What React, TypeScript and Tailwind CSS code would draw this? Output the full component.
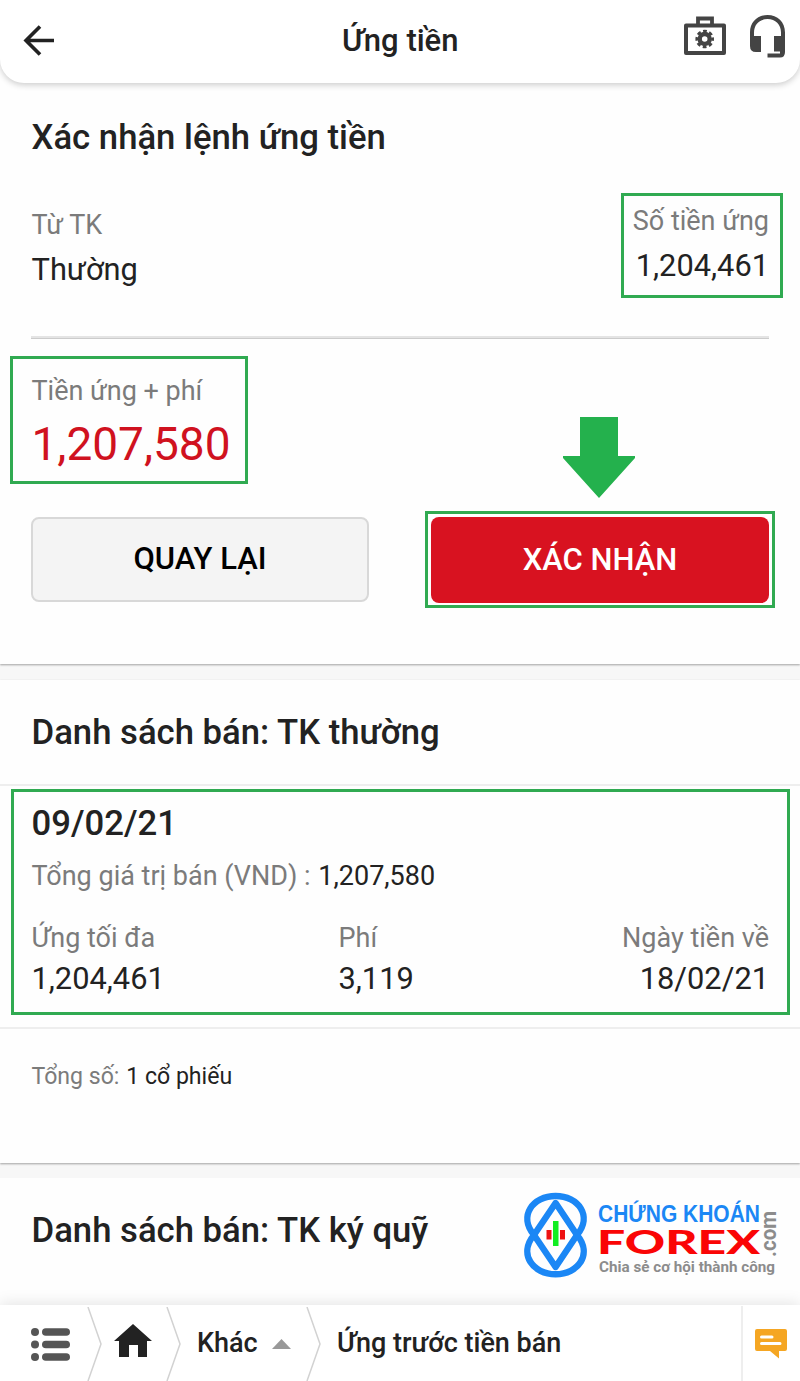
import type { ReactNode } from "react";

const label = "text-[27px] leading-8 text-[#7b7b7b]";
const value = "text-[30.8px] leading-9 text-[#222222]";
const heading = "text-[34.7px] font-medium leading-10 text-[#222222]";

const details = [
  { label: "Ứng tối đa", value: "1,204,461", className: "w-[307px]" },
  { label: "Phí", value: "3,119", className: "flex-1" },
  { label: "Ngày tiền về", value: "18/02/21", className: "text-right" },
];

function Highlight({ className, children }: { className: string; children: ReactNode }) {
  return <div className={`border-3 border-[#30aa51] ${className}`}>{children}</div>;
}

function ToolboxIcon() {
  return (
    <svg width="42" height="40" viewBox="0 0 42 40" fill="none" stroke="#444444">
      <path d="M2 9.500h38V37H2z" strokeWidth="4" strokeLinejoin="round" />
      <path d="M14 9V2.500h14V9" strokeWidth="3.8" />
      <circle cx="20.7" cy="23" r="5" strokeWidth="4.4" />
      <circle cx="20.7" cy="23" r="7.9" strokeWidth="2.8" strokeDasharray="3.7 2.505" strokeDashoffset="1.85" />
    </svg>
  );
}

function HeadsetIcon() {
  return (
    <svg width="36" height="44" viewBox="0 0 36 44" fill="#444444">
      <path d="M0 17.500C0 7 7.500 0 17.500 0S35 7 35 17.500V37q0 5.500-5 5.500H17.500v-4H30v-2h-6V21h7v-3.500C31 9.500 25.500 4 17.500 4S4 9.500 4 17.500V21h7v16H6q-6 0-6-6z" />
    </svg>
  );
}

function Logo() {
  return (
    <svg width="260" height="90" viewBox="520 1190 260 90">
      <g fill="none" stroke="#1b87f5" strokeWidth="6.4" strokeLinejoin="round">
        <path d="M555.600 1267 534 1235C518 1216 533 1196 555.600 1196S593 1216 577 1235Z" />
        <path d="M555.600 1203 534 1235C518 1254 533 1274.300 555.600 1274.300S593 1254 577 1235Z" />
      </g>
      <path d="M546.500 1230h5v9.500h-5zM560 1230h5v9.500h-5z" fill="#ee1111" />
      <path d="M553 1221h5.500v25H553z" fill="#11ee22" />
      <text x="598" y="1222" fontSize="23" fontWeight="700" fill="#1b87f5" fontFamily="Liberation Sans, sans-serif" textLength="162" lengthAdjust="spacingAndGlyphs">CHỨNG KHOÁN</text>
      <text x="597" y="1253.5" fontSize="33" fontWeight="900" fill="#fa0505" fontFamily="Lato, sans-serif" textLength="163" lengthAdjust="spacingAndGlyphs">FOREX</text>
      <text x="599" y="1271.5" fontSize="15.5" fontWeight="700" fill="#8c8c8c" fontFamily="Roboto, sans-serif" textLength="176" lengthAdjust="spacingAndGlyphs">Chia sẻ cơ hội thành công</text>
      <text transform="translate(776 1257) rotate(-90)" fontSize="22" fontWeight="700" fill="#8c8c8c" fontFamily="Roboto, sans-serif" textLength="46" lengthAdjust="spacingAndGlyphs">.com</text>
    </svg>
  );
}

function Separator() {
  return (
    <svg className="shrink-0" width="15" height="74" viewBox="0 0 15 74" fill="none" stroke="#d2d2d2" strokeWidth="1.5">
      <path d="M1 0 14 37 1 74" />
    </svg>
  );
}

export default function App() {
  return (
    <div className="flex h-[1381px] w-[800px] flex-col overflow-hidden bg-[#f7f7f7] font-['Roboto',sans-serif]">
      <div className="h-[664px] bg-[#fefefe] shadow-[0_1px_2px_rgba(0,0,0,0.35)]">
        <header className="flex h-[83px] items-start rounded-b-[24px] bg-white pl-[23px] pr-[14px] shadow-[0_2px_6px_rgba(0,0,0,0.2)]">
          <svg className="mt-[25px]" width="31" height="31" viewBox="0 0 31 31" fill="none" stroke="#222222" strokeWidth="3.6">
            <path d="M31 15.500H3M17 1.500 3 15.500l14 14" />
          </svg>
          <h1 className="ml-[288px] mt-[23px] w-[130px] text-[31px] font-medium leading-9 text-[#222222]">Ứng tiền</h1>
          <div className="ml-auto mt-[15px] flex gap-6">
            <div className="pt-px">
              <ToolboxIcon />
            </div>
            <HeadsetIcon />
          </div>
        </header>

        <h2 className={`ml-[31.5px] mt-[34px] ${heading}`}>Xác nhận lệnh ứng tiền</h2>
        <div className="mt-9 flex justify-between pl-[31.5px] pr-[17px]">
          <div className="pt-4">
            <p className={label}>Từ TK</p>
            <p className={`mt-[11px] ${value}`}>Thường</p>
          </div>
          <Highlight className="h-[105px] w-[162px] pr-[11px] pt-[9px] text-right">
            <p className={label}>Số tiền ứng</p>
            <p className={`mt-[11px] ${value}`}>1,204,461</p>
          </Highlight>
        </div>
        <div className="mx-[31px] mt-[38px] h-[3px] border-b border-[#cccccc] bg-[#e4e4e4]" />

        <div className="mt-[17px] flex h-[155px] items-start pl-2.5">
          <Highlight className="h-32 w-[238px] pl-[18.5px] pt-4">
            <p className={label}>Tiền ứng + phí</p>
            <p className="mt-[11px] text-[46px] leading-[52px] text-[#d0121f]">1,207,580</p>
          </Highlight>
          <svg className="ml-[315px] mt-[61px]" width="72" height="81" viewBox="0 0 72 81" fill="#24b14d">
            <path d="M17 0h38v39h17v2L36 81 0 41v-2h17z" />
          </svg>
        </div>
        <div className="flex items-center justify-between pl-[31px] pr-[25px]">
          <button className="h-[85px] w-[338px] rounded-lg border-2 border-[#d8d8d8] bg-[#f4f4f4] text-[31px] font-medium text-black">
            QUAY LẠI
          </button>
          <Highlight className="h-[97px] w-[350px] p-[3px]">
            <button className="h-[86px] w-[338px] rounded-lg bg-[#d81220] text-[31px] font-medium text-white">XÁC NHẬN</button>
          </Highlight>
        </div>
      </div>

      <section className="mt-4 h-[483px] bg-[#fefefe] pt-8 shadow-[0_1px_2px_rgba(0,0,0,0.35)]">
        <h2 className={`ml-[31.5px] ${heading}`}>Danh sách bán: TK thường</h2>
        <div className="mt-8 h-[245px] border-y-2 border-[#eeeeee] px-[11px] pt-[3px]">
          <Highlight className="h-[226px] w-[779px] pl-[17.5px] pr-[18px] pt-[11px]">
            <h3 className={heading}>09/02/21</h3>
            <p className={`mt-[17px] ${label}`}>
              Tổng giá trị bán (VND) : <span className="ml-px text-[#222222]">1,207,580</span>
            </p>
            <div className="mt-[30px] flex">
              {details.map((item) => (
                <div key={item.label} className={item.className}>
                  <p className={label}>{item.label}</p>
                  <p className={`mt-[7px] ${value}`}>{item.value}</p>
                </div>
              ))}
            </div>
          </Highlight>
        </div>
        <p className="ml-[31.5px] mt-8 text-[23.1px] leading-8 text-[#7b7b7b]">
          Tổng số: <span className="ml-px text-[#222222]">1 cổ phiếu</span>
        </p>
      </section>

      <section className="mt-[15px] flex h-[127px] justify-between bg-[#fefefe] pl-[31.5px] pr-5 pt-3">
        <h2 className={`mt-5 ${heading}`}>Danh sách bán: TK ký quỹ</h2>
        <Logo />
      </section>

      <footer className="relative flex h-[76px] items-center bg-white pt-px text-[27px] font-medium text-[#222222] shadow-[0_-2px_14px_rgba(0,0,0,0.1)]">
        <svg className="ml-[31px] mr-[17px] mt-0.5" width="39" height="33" viewBox="0 0 39 33" fill="#555555">
          {[4, 16.5, 29].map((y) => (
            <g key={y}>
              <circle cx="4" cy={y} r="4" />
              <rect x="11" y={y - 3.8} width="28" height="7.6" rx="3.8" />
            </g>
          ))}
        </svg>
        <Separator />
        <svg className="mb-1.5 ml-3 mr-3.5" width="38" height="33" viewBox="0 0 38 33" fill="#222222">
          <path d="M19 0 38 17h-5v16h-9V21h-9v12H5V17H0z" />
        </svg>
        <Separator />
        <span className="ml-4 w-[75px]">Khác</span>
        <svg className="mr-[15px] mt-px" width="19" height="10" viewBox="0 0 19 10" fill="#999999">
          <path d="M9.500 0 19 10H0z" />
        </svg>
        <Separator />
        <span className="ml-4">Ứng trước tiền bán</span>
        <div className="ml-auto flex h-full w-[59px] items-center border-l-2 border-[#eeeeee] pl-3">
          <svg className="mt-px" width="32" height="30" viewBox="0 0 32 30">
            <path d="M2 0h28q2 0 2 2v18q0 2-2 2h-6v7.500L15 22H2q-2 0-2-2V2q0-2 2-2z" fill="#f5a623" />
            <path d="M6.500 8H17M6.500 14.500h18.500" stroke="white" strokeWidth="3" strokeLinecap="round" />
          </svg>
        </div>
      </footer>
    </div>
  );
}
